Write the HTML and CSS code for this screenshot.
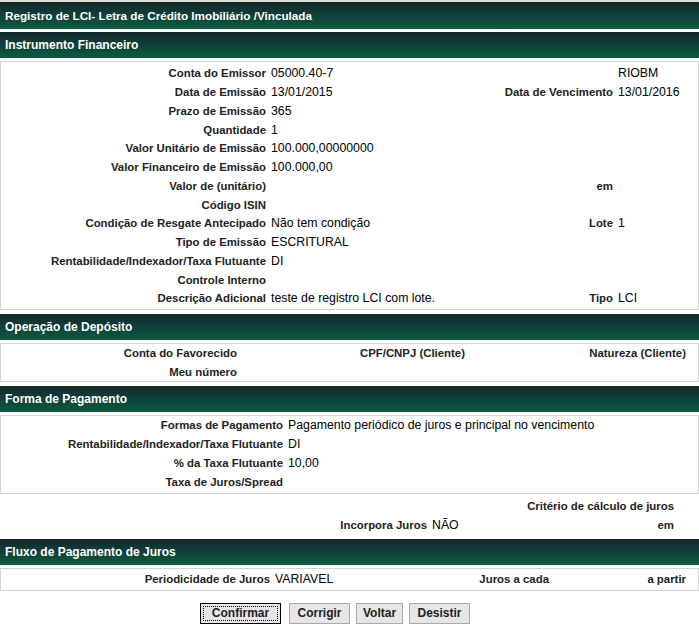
FILE: index.html
```html
<!DOCTYPE html>
<html lang="pt-BR">
<head>
    <meta charset="UTF-8">
    <meta name="viewport" content="width=device-width, initial-scale=1.0">
    <title>Registro de LCI</title>
    <link rel="stylesheet" href="styles.css">
</head>
<body>
    <div class="page">
        <div class="title-bar">Registro de LCI- Letra de Crédito Imobiliário /Vinculada</div>

        <!-- Instrumento Financeiro -->
        <div class="section-bar">Instrumento Financeiro</div>
        <div class="panel grid-instrumento">
            <span class="lbl">Conta do Emissor</span><span class="val">05000.40-7</span><span class="lbl"></span><span class="val">RIOBM</span>
            <span class="lbl">Data de Emissão</span><span class="val">13/01/2015</span><span class="lbl">Data de Vencimento</span><span class="val">13/01/2016</span>
            <span class="lbl">Prazo de Emissão</span><span class="val">365</span><span class="lbl"></span><span class="val"></span>
            <span class="lbl">Quantidade</span><span class="val">1</span><span class="lbl"></span><span class="val"></span>
            <span class="lbl">Valor Unitário de Emissão</span><span class="val">100.000,00000000</span><span class="lbl"></span><span class="val"></span>
            <span class="lbl">Valor Financeiro de Emissão</span><span class="val">100.000,00</span><span class="lbl"></span><span class="val"></span>
            <span class="lbl">Valor de (unitário)</span><span class="val"></span><span class="lbl">em</span><span class="val"></span>
            <span class="lbl">Código ISIN</span><span class="val"></span><span class="lbl"></span><span class="val"></span>
            <span class="lbl">Condição de Resgate Antecipado</span><span class="val">Não tem condição</span><span class="lbl">Lote</span><span class="val">1</span>
            <span class="lbl">Tipo de Emissão</span><span class="val">ESCRITURAL</span><span class="lbl"></span><span class="val"></span>
            <span class="lbl">Rentabilidade/Indexador/Taxa Flutuante</span><span class="val">DI</span><span class="lbl"></span><span class="val"></span>
            <span class="lbl">Controle Interno</span><span class="val"></span><span class="lbl"></span><span class="val"></span>
            <span class="lbl">Descrição Adicional</span><span class="val">teste de registro LCI com lote.</span><span class="lbl">Tipo</span><span class="val">LCI</span>
        </div>

        <!-- Operação de Depósito -->
        <div class="section-bar">Operação de Depósito</div>
        <div class="panel grid-deposito">
            <span class="lbl">Conta do Favorecido</span><span class="val"></span>
            <span class="lbl">CPF/CNPJ (Cliente)</span><span class="val"></span>
            <span class="lbl">Natureza (Cliente)</span><span class="val"></span>
            <span class="lbl">Meu número</span><span class="val"></span>
            <span class="lbl"></span><span class="val"></span>
            <span class="lbl"></span><span class="val"></span>
        </div>

        <!-- Forma de Pagamento -->
        <div class="section-bar">Forma de Pagamento</div>
        <div class="panel grid-pagamento">
            <span class="lbl">Formas de Pagamento</span><span class="val">Pagamento periódico de juros e principal no vencimento</span>
            <span class="lbl">Rentabilidade/Indexador/Taxa Flutuante</span><span class="val">DI</span>
            <span class="lbl">% da Taxa Flutuante</span><span class="val">10,00</span>
            <span class="lbl">Taxa de Juros/Spread</span><span class="val"></span>
        </div>
        <div class="plain grid-juros">
            <span class="lbl"></span><span class="val"></span><span class="lbl">Critério de cálculo de juros</span><span class="val"></span>
            <span class="lbl">Incorpora Juros</span><span class="val">NÃO</span><span class="lbl">em</span><span class="val"></span>
        </div>

        <!-- Fluxo de Pagamento de Juros -->
        <div class="section-bar">Fluxo de Pagamento de Juros</div>
        <div class="panel grid-fluxo">
            <span class="lbl">Periodicidade de Juros</span><span class="val">VARIAVEL</span>
            <span class="lbl">Juros a cada</span><span class="val"></span>
            <span class="lbl">a partir</span><span class="val"></span>
        </div>

        <div class="actions">
            <button class="btn btn-default" type="button">Confirmar</button>
            <button class="btn btn-corrigir" type="button">Corrigir</button>
            <button class="btn btn-voltar" type="button">Voltar</button>
            <button class="btn btn-desistir" type="button">Desistir</button>
        </div>
    </div>
</body>
</html>
```

FILE: styles.css
```css
body {
    margin: 0;
    background-color: #ffffff;
    font-family: "Liberation Sans", Arial, sans-serif;
    color: #000;
}

.page {
    width: 699px;
    border-top: 2px solid #dcdcdc;
}

.title-bar,
.section-bar {
    background: linear-gradient(#14272a 0%, #10403a 50%, #0b5d3c 100%);
    color: #ffffff;
    font-weight: bold;
    font-size: 12px;
    padding-left: 5px;
    display: flex;
    align-items: center;
}

.title-bar {
    height: 27px;
    font-size: 11.7px;
}

.section-bar {
    height: 26px;
    margin-top: 3px;
}

.panel {
    border: 1px solid #d3d3d3;
    margin-top: 3px;
}

.panel + .section-bar,
.plain + .section-bar {
    margin-top: 4px;
}

.lbl {
    font-weight: bold;
    font-size: 11.4px;
    color: #222;
    text-align: right;
    white-space: nowrap;
}

.val {
    font-size: 12.3px;
    padding-left: 5px;
    white-space: nowrap;
}

.grid-instrumento {
    display: grid;
    grid-template-columns: 265px 192px 155px 1fr;
    grid-auto-rows: 18.75px;
    align-items: center;
    padding: 2px 0 1px;
}

.grid-deposito {
    display: grid;
    grid-template-columns: 236px 121px 107px 121px 100px 1fr;
    grid-auto-rows: 18.5px;
    align-items: center;
}

.grid-pagamento {
    display: grid;
    grid-template-columns: 282px 1fr;
    grid-auto-rows: 19px;
    align-items: center;
    padding-bottom: 1px;
}

.plain {
    padding: 3px 1px 0;
}

.grid-juros {
    display: grid;
    grid-template-columns: 426px 100px 147px 1fr;
    grid-auto-rows: 19px;
    align-items: center;
}

.grid-fluxo {
    display: grid;
    grid-template-columns: 269px 164px 115px 37px 100px 1fr;
    grid-auto-rows: 21px;
    align-items: center;
}

.actions {
    display: flex;
    gap: 6px;
    padding: 12px 0 0 200px;
}

.btn {
    height: 21px;
    padding: 0;
    font-family: "Liberation Sans", Arial, sans-serif;
    font-weight: bold;
    font-size: 12px;
    color: #222;
    background-color: #e6e6e6;
    border: 1px solid #a9a9a9;
    border-radius: 0;
}

.btn-default {
    width: 81px;
    margin-right: 2px;
    border: 1px solid #000;
    outline: 1px dotted #000;
    outline-offset: -4px;
}

.btn-corrigir,
.btn-desistir {
    width: 61px;
}

.btn-voltar {
    width: 47px;
}
```
